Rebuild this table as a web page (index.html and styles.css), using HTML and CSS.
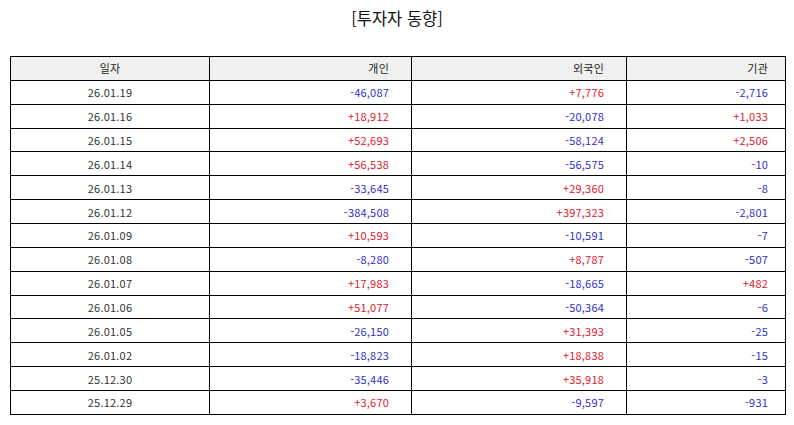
FILE: index.html
```html
<!DOCTYPE html>
<html lang="ko">
<head>
<meta charset="utf-8">
<link rel="stylesheet" href="styles.css">
</head>
<body>
<h1 class="title">[투자자 동향]</h1>
<table class="grid">
  <colgroup>
    <col class="c1"><col class="c2"><col class="c3"><col class="c4">
  </colgroup>
  <thead>
    <tr><th class="date">일자</th><th class="n2">개인</th><th class="n3">외국인</th><th class="n4">기관</th></tr>
  </thead>
  <tbody>
    <tr><td class="date">26.01.19</td><td class="n2 dn">-46,087</td><td class="n3 up">+7,776</td><td class="n4 dn">-2,716</td></tr>
    <tr><td class="date">26.01.16</td><td class="n2 up">+18,912</td><td class="n3 dn">-20,078</td><td class="n4 up">+1,033</td></tr>
    <tr><td class="date">26.01.15</td><td class="n2 up">+52,693</td><td class="n3 dn">-58,124</td><td class="n4 up">+2,506</td></tr>
    <tr><td class="date">26.01.14</td><td class="n2 up">+56,538</td><td class="n3 dn">-56,575</td><td class="n4 dn">-10</td></tr>
    <tr><td class="date">26.01.13</td><td class="n2 dn">-33,645</td><td class="n3 up">+29,360</td><td class="n4 dn">-8</td></tr>
    <tr><td class="date">26.01.12</td><td class="n2 dn">-384,508</td><td class="n3 up">+397,323</td><td class="n4 dn">-2,801</td></tr>
    <tr><td class="date">26.01.09</td><td class="n2 up">+10,593</td><td class="n3 dn">-10,591</td><td class="n4 dn">-7</td></tr>
    <tr><td class="date">26.01.08</td><td class="n2 dn">-8,280</td><td class="n3 up">+8,787</td><td class="n4 dn">-507</td></tr>
    <tr><td class="date">26.01.07</td><td class="n2 up">+17,983</td><td class="n3 dn">-18,665</td><td class="n4 up">+482</td></tr>
    <tr><td class="date">26.01.06</td><td class="n2 up">+51,077</td><td class="n3 dn">-50,364</td><td class="n4 dn">-6</td></tr>
    <tr><td class="date">26.01.05</td><td class="n2 dn">-26,150</td><td class="n3 up">+31,393</td><td class="n4 dn">-25</td></tr>
    <tr><td class="date">26.01.02</td><td class="n2 dn">-18,823</td><td class="n3 up">+18,838</td><td class="n4 dn">-15</td></tr>
    <tr><td class="date">25.12.30</td><td class="n2 dn">-35,446</td><td class="n3 up">+35,918</td><td class="n4 dn">-3</td></tr>
    <tr><td class="date">25.12.29</td><td class="n2 up">+3,670</td><td class="n3 dn">-9,597</td><td class="n4 dn">-931</td></tr>
  </tbody>
</table>
</body>
</html>
```
FILE: styles.css
```css
html, body {
  margin: 0;
  padding: 0;
  background: #fff;
}
body {
  width: 794px;
  height: 425px;
  font-family: "Noto Sans CJK KR", "Noto Sans", sans-serif;
  color: #222;
}
.title {
  margin: 0;
  padding-top: 7px;
  height: 50px;
  box-sizing: border-box;
  font-size: 16.5px;
  font-weight: normal;
  line-height: 22px;
  text-align: center;
  color: #111;
}
.grid {
  margin-left: 10px;
  margin-top: 6px;
  width: 775px;
  border-collapse: collapse;
  table-layout: fixed;
  font-size: 11px;
  letter-spacing: 0.2px;
}
.c1 { width: 199px; }
.c2 { width: 202px; }
.c3 { width: 215px; }
.c4 { width: 159px; }
.grid th, .grid td {
  border: 1px solid #000;
  padding: 0;
  height: 22.87px;
  line-height: 14px;
  font-weight: normal;
  white-space: nowrap;
}
.grid th {
  background: #f0f0f0;
  color: #222;
}
.date { text-align: center; color: #333; }
.n2 { text-align: right; padding-right: 22px !important; }
.n3 { text-align: right; padding-right: 22px !important; }
.n4 { text-align: right; padding-right: 17px !important; }
.up { color: #e0202c; }
.dn { color: #3030cc; }
```
